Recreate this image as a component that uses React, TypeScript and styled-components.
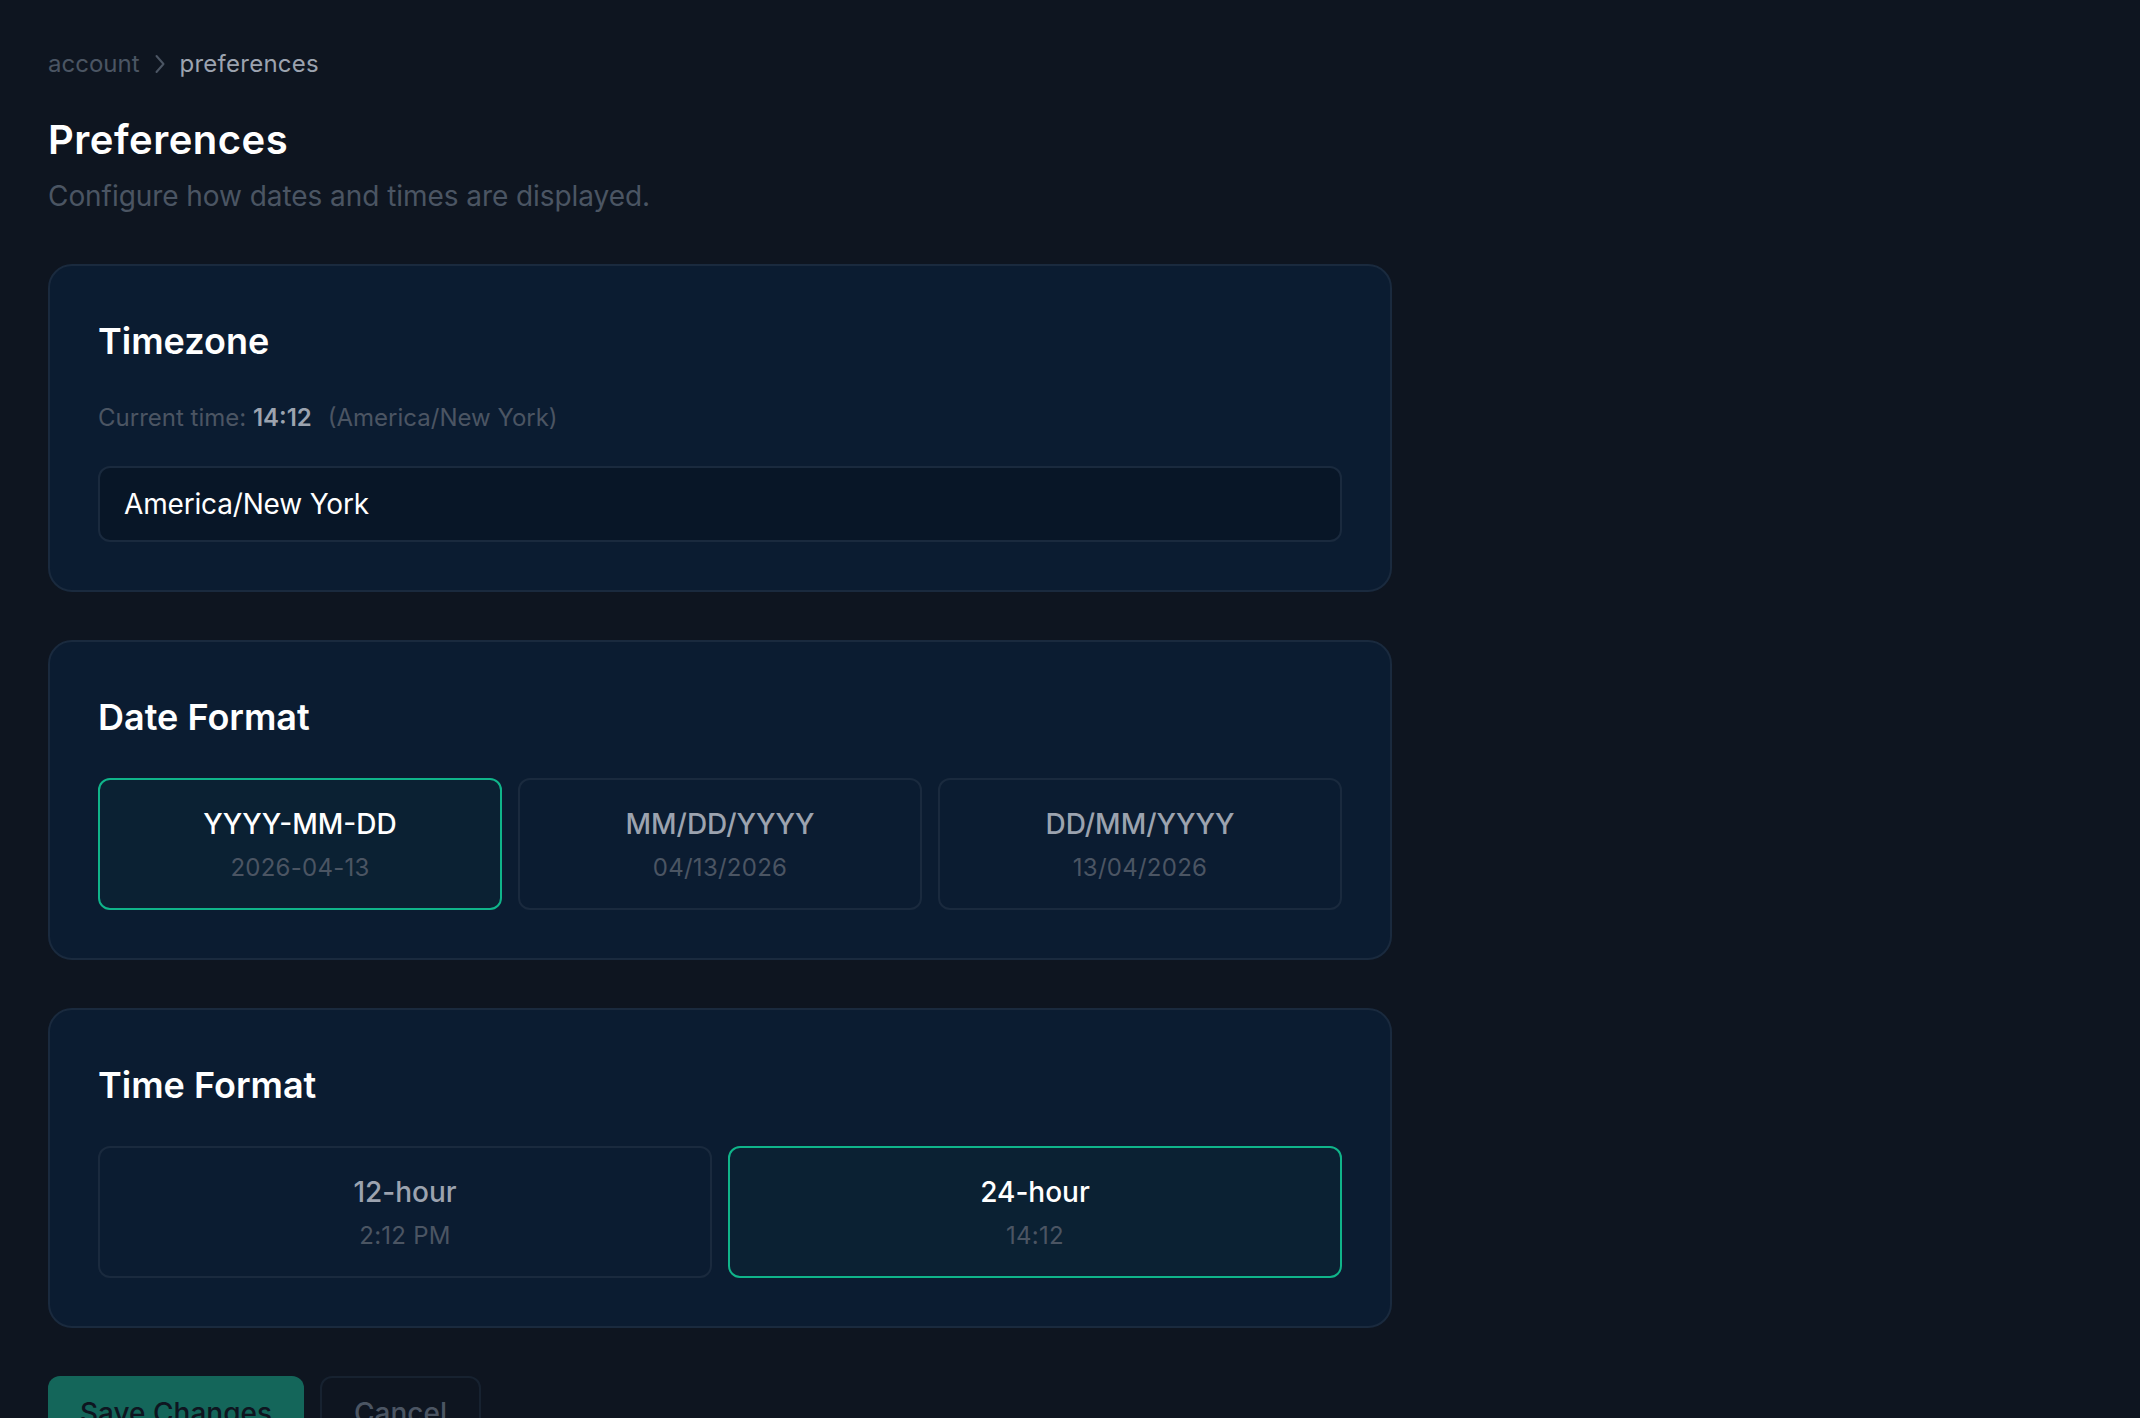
import React from "react";
import styled, { createGlobalStyle } from "styled-components";

const GlobalStyle = createGlobalStyle`
  html, body, #root {
    margin: 0;
    height: 100%;
    overflow: hidden;
    background: #0e1520;
  }
  * {
    box-sizing: border-box;
  }
`;

const Page = styled.div`
  height: 1418px;
  overflow: hidden;
  padding: 48px;
  font-family: "Inter", "Liberation Sans", sans-serif;
  background: #0e1520;
  color: #fff;
`;

const Content = styled.div`
  width: 1344px;
  display: flex;
  flex-direction: column;
`;

const Breadcrumb = styled.nav`
  display: flex;
  align-items: center;
  gap: 12px;
  height: 32px;
  font-size: 24px;
  line-height: 32px;
  color: #4b5563;
`;

const Crumb = styled.span<{ $current?: boolean }>`
  color: ${(props) => (props.$current ? "#9ca3af" : "#4b5563")};
  letter-spacing: ${(props) => (props.$current ? "0.25px" : "0")};
`;

const Title = styled.h1`
  margin: 32px 0 0;
  font-size: 40px;
  line-height: 56px;
  font-weight: 600;
  letter-spacing: 0.5px;
  color: #fff;
`;

const Subtitle = styled.p`
  margin: 8px 0 0;
  font-size: 28px;
  line-height: 40px;
  letter-spacing: -0.06px;
  color: #4b5563;
`;

const Card = styled.section`
  margin-top: 48px;
  padding: 48px;
  background: #0b1c31;
  border: 2px solid #1a2a3e;
  border-radius: 24px;
`;

const CardTitle = styled.h2`
  margin: 0;
  font-size: 36px;
  line-height: 55px;
  padding-bottom: 1px;
  font-weight: 600;
  color: #fff;
`;

const TimeLine = styled.p`
  margin: 32px 0 0;
  font-size: 24px;
  line-height: 32px;
  color: #4b5563;
`;

const TimeValue = styled.strong`
  font-weight: 600;
  color: #9ca3af;
`;

const TimeZoneName = styled.span`
  margin-left: 16px;
`;

const ZoneSelect = styled.div`
  margin-top: 32px;
  height: 76px;
  padding: 0 24px;
  display: flex;
  align-items: center;
  font-size: 28px;
  letter-spacing: -0.17px;
  color: #fff;
  background: #081627;
  border: 2px solid #1a2a3e;
  border-radius: 12px;
`;

const OptionGrid = styled.div<{ $columns: number }>`
  margin-top: 32px;
  display: grid;
  grid-template-columns: repeat(${(props) => props.$columns}, 1fr);
  gap: 16px;
`;

const Option = styled.button<{ $active?: boolean }>`
  height: 132px;
  padding: 2px 0 0;
  display: flex;
  flex-direction: column;
  align-items: center;
  justify-content: center;
  gap: 10px;
  font-family: inherit;
  background: ${(props) => (props.$active ? "#0b2133" : "transparent")};
  border: 2px solid ${(props) => (props.$active ? "#10b48a" : "#1a2a3e")};
  border-radius: 12px;
`;

const OptionLabel = styled.span<{ $active?: boolean }>`
  font-size: 28px;
  line-height: 36px;
  font-weight: 500;
  color: ${(props) => (props.$active ? "#fff" : "#9ca3af")};
`;

const OptionHint = styled.span`
  font-size: 24px;
  line-height: 32px;
  letter-spacing: 0.25px;
  color: #4b5563;
`;

const Actions = styled.div`
  margin-top: 48px;
  display: flex;
  gap: 16px;
`;

const SaveButton = styled.button`
  height: 74px;
  padding: 0 32px;
  font-family: inherit;
  font-size: 28px;
  font-weight: 500;
  color: #0e1520;
  background: #14665a;
  border: none;
  border-radius: 12px;
`;

const CancelButton = styled.button`
  height: 74px;
  padding: 0 32px;
  font-family: inherit;
  font-size: 28px;
  font-weight: 500;
  color: #4b5563;
  background: transparent;
  border: 2px solid #172230;
  border-radius: 12px;
`;

const dateFormats = [
  { label: "YYYY-MM-DD", hint: "2026-04-13", active: true },
  { label: "MM/DD/YYYY", hint: "04/13/2026" },
  { label: "DD/MM/YYYY", hint: "13/04/2026" },
];

const timeFormats = [
  { label: "12-hour", hint: "2:12 PM" },
  { label: "24-hour", hint: "14:12", active: true },
];

const Chevron = () => (
  <svg width="16" height="20" viewBox="0 0 16 20" fill="none" stroke="#4b5563" strokeWidth="2" strokeLinecap="round" strokeLinejoin="round">
    <path d="M4.5 2l7 8-7 8" />
  </svg>
);

export default function App() {
  return (
    <Page>
      <GlobalStyle />
      <Content>
        <Breadcrumb>
          <Crumb>account</Crumb>
          <Chevron />
          <Crumb $current>preferences</Crumb>
        </Breadcrumb>
        <Title>Preferences</Title>
        <Subtitle>Configure how dates and times are displayed.</Subtitle>

        <Card>
          <CardTitle>Timezone</CardTitle>
          <TimeLine>
            Current time: <TimeValue>14:12</TimeValue>
            <TimeZoneName>(America/New York)</TimeZoneName>
          </TimeLine>
          <ZoneSelect>America/New York</ZoneSelect>
        </Card>

        <Card>
          <CardTitle>Date Format</CardTitle>
          <OptionGrid $columns={3}>
            {dateFormats.map((item) => (
              <Option key={item.label} $active={item.active}>
                <OptionLabel $active={item.active}>{item.label}</OptionLabel>
                <OptionHint>{item.hint}</OptionHint>
              </Option>
            ))}
          </OptionGrid>
        </Card>

        <Card>
          <CardTitle>Time Format</CardTitle>
          <OptionGrid $columns={2}>
            {timeFormats.map((item) => (
              <Option key={item.label} $active={item.active}>
                <OptionLabel $active={item.active}>{item.label}</OptionLabel>
                <OptionHint>{item.hint}</OptionHint>
              </Option>
            ))}
          </OptionGrid>
        </Card>

        <Actions>
          <SaveButton>Save Changes</SaveButton>
          <CancelButton>Cancel</CancelButton>
        </Actions>
      </Content>
    </Page>
  );
}
